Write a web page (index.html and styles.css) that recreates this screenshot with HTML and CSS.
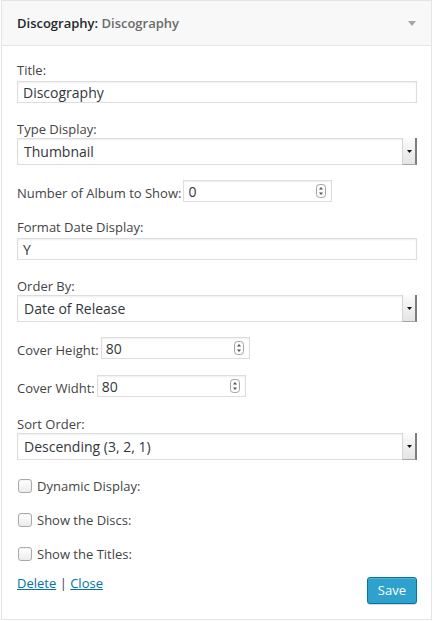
FILE: index.html
```html
<!DOCTYPE html>
<html lang="en">
<head>
<meta charset="utf-8">
<title>Discography widget</title>
<link rel="stylesheet" href="styles.css">
</head>
<body>
<div class="widget">
  <div class="widget-top">
    <h4 class="widget-title">Discography: <span class="in-title">Discography</span></h4>
    <svg class="toggle" width="8" height="5" viewBox="0 0 8 5"><polygon points="0,0 8,0 4,5" fill="#a0a5aa"/></svg>
  </div>
  <div class="widget-inside">
    <div class="field">
      <label class="lbl">Title:</label>
      <input class="text" type="text" value="Discography">
    </div>
    <div class="field gap17">
      <label class="lbl">Type Display:</label>
      <div class="select"><span class="value">Thumbnail</span><span class="arrow"><svg width="5" height="3" viewBox="0 0 5 3"><polygon points="0,0 5,0 2.5,3" fill="#111"/></svg></span></div>
    </div>
    <div class="row gap15">
      <label class="lbl">Number of Album to Show:</label>
      <div class="num"><input type="text" value="0"><svg class="spin" width="10" height="14" viewBox="0 0 10 14"><rect x="0.5" y="0.5" width="9" height="13" rx="3" fill="#fbfbfb" stroke="#a3a3a3"/><polygon points="3,5.5 7,5.5 5,3" fill="#555"/><polygon points="3,8.5 7,8.5 5,11" fill="#555"/></svg></div>
    </div>
    <div class="field gap16">
      <label class="lbl">Format Date Display:</label>
      <input class="text" type="text" value="Y">
    </div>
    <div class="field gap17">
      <label class="lbl">Order By:</label>
      <div class="select"><span class="value">Date of Release</span><span class="arrow"><svg width="5" height="3" viewBox="0 0 5 3"><polygon points="0,0 5,0 2.5,3" fill="#111"/></svg></span></div>
    </div>
    <div class="row gap15">
      <label class="lbl">Cover Height:</label>
      <div class="num"><input type="text" value="80"><svg class="spin" width="10" height="14" viewBox="0 0 10 14"><rect x="0.5" y="0.5" width="9" height="13" rx="3" fill="#fbfbfb" stroke="#a3a3a3"/><polygon points="3,5.5 7,5.5 5,3" fill="#555"/><polygon points="3,8.5 7,8.5 5,11" fill="#555"/></svg></div>
    </div>
    <div class="row gap16">
      <label class="lbl">Cover Widht:</label>
      <div class="num"><input type="text" value="80"><svg class="spin" width="10" height="14" viewBox="0 0 10 14"><rect x="0.5" y="0.5" width="9" height="13" rx="3" fill="#fbfbfb" stroke="#a3a3a3"/><polygon points="3,5.5 7,5.5 5,3" fill="#555"/><polygon points="3,8.5 7,8.5 5,11" fill="#555"/></svg></div>
    </div>
    <div class="field gap18">
      <label class="lbl">Sort Order:</label>
      <div class="select"><span class="value">Descending (3, 2, 1)</span><span class="arrow"><svg width="5" height="3" viewBox="0 0 5 3"><polygon points="0,0 5,0 2.5,3" fill="#111"/></svg></span></div>
    </div>
    <div class="check gap17"><span class="box"></span><label class="lbl">Dynamic Display:</label></div>
    <div class="check gap16"><span class="box"></span><label class="lbl">Show the Discs:</label></div>
    <div class="check gap16"><span class="box"></span><label class="lbl">Show the Titles:</label></div>
    <div class="actions">
      <div class="links"><a href="#">Delete</a> | <a href="#">Close</a></div>
      <button class="button-primary" type="button">Save</button>
    </div>
  </div>
</div>
</body>
</html>
```
FILE: styles.css
```css
body {
  margin: 0;
  font-family: "Open Sans", "Liberation Sans", sans-serif;
  font-size: 13px;
  color: #444;
  background: #fff;
}
.widget {
  margin-left: 1px;
  width: 431px;
  box-sizing: border-box;
  border: 1px solid #e5e5e5;
  background: #fff;
}
.widget-top {
  height: 44px;
  display: flex;
  align-items: center;
  justify-content: space-between;
  padding: 0 15px;
  background: #f8f8f8;
  border-bottom: 1px solid #e5e5e5;
}
.widget-title {
  margin: 0;
  font-size: 13px;
  font-weight: 600;
  line-height: 18px;
  color: #23282d;
}
.in-title {
  color: #6b6b6b;
}
.widget-inside {
  padding: 15px 14px 15px 15px;
}
.lbl {
  display: block;
  line-height: 18px;
  color: #444;
}
.gap15 { margin-top: 15px; }
.gap16 { margin-top: 16px; }
.gap17 { margin-top: 17px; }
.gap18 { margin-top: 18px; }
.text {
  display: block;
  width: 400px;
  height: 22px;
  box-sizing: border-box;
  margin: 2px 0 0;
  padding: 0 5px;
  border: 1px solid #ddd;
  box-shadow: inset 0 1px 2px rgba(0, 0, 0, 0.07);
  font-family: "Open Sans", sans-serif;
  font-size: 14px;
  color: #32373c;
  background: #fff;
  outline: none;
}
.select {
  display: flex;
  align-items: center;
  width: 400px;
  height: 27px;
  box-sizing: border-box;
  border: 1px solid #ddd;
  box-shadow: inset 0 1px 2px rgba(0, 0, 0, 0.07);
  padding-left: 6px;
  font-size: 14px;
  color: #32373c;
  background: #fff;
}
.select .arrow {
  margin: -1px -1px -1px auto;
  align-self: stretch;
  width: 15px;
  box-sizing: border-box;
  display: flex;
  align-items: center;
  justify-content: center;
  background: linear-gradient(#fbfbfb, #e4e4e4);
  border-left: 1px solid #d4d4d4;
  border-right: 2px solid #7d7d7d;
  border-bottom: 1px solid #a5a5a5;
}
.row {
  display: flex;
  align-items: flex-end;
  height: 22px;
}
.num {
  display: flex;
  align-items: center;
  width: 149px;
  height: 22px;
  box-sizing: border-box;
  margin-left: 2px;
  border: 1px solid #ddd;
  box-shadow: inset 0 1px 2px rgba(0, 0, 0, 0.07);
  background: #fff;
}
.num input {
  flex: 1;
  min-width: 0;
  border: 0;
  padding: 0 4px;
  height: 20px;
  font-family: "Open Sans", sans-serif;
  font-size: 14px;
  color: #32373c;
  background: transparent;
  outline: none;
}
.num .spin {
  margin-right: 5px;
  flex: none;
}
.check {
  display: flex;
  align-items: center;
  height: 18px;
}
.box {
  width: 14px;
  height: 14px;
  box-sizing: border-box;
  margin: 0 5px 0 1px;
  border: 1px solid #a9a9a9;
  border-radius: 3px;
  background: linear-gradient(#ffffff, #ececec);
  box-shadow: inset 0 1px 1px rgba(0, 0, 0, 0.05);
}
.actions {
  display: flex;
  justify-content: space-between;
  align-items: flex-start;
  margin-top: 11px;
}
.links {
  line-height: 18px;
  color: #444;
}
.links a {
  color: #0074a2;
  text-decoration: underline;
}
.button-primary {
  margin-top: 3px;
  height: 27px;
  padding: 0 10px;
  border: 1px solid #0074a2;
  border-radius: 3px;
  background: #2ea2cc;
  color: #fff;
  font-family: "Open Sans", sans-serif;
  font-size: 13px;
  line-height: 25px;
  box-shadow: inset 0 1px 0 rgba(120, 200, 230, 0.5), 0 1px 0 rgba(0, 0, 0, 0.15);
}
```
